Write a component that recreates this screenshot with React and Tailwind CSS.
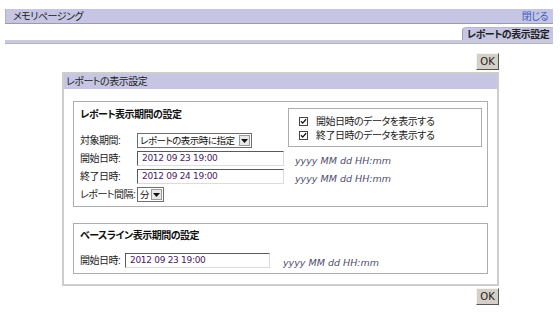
import React from 'react'

const jp = "font-['Liberation_Sans','Noto_Sans_CJK_JP',sans-serif] [font-feature-settings:'palt'] tracking-[-0.5px]"

function OkButton() {
  return (
    <div className="flex justify-end">
      <button className="h-[17px] w-[23px] bg-[#d4d0c8] border border-t-[#f4f4f4] border-l-[#f4f4f4] border-b-[#555] border-r-[#555] text-[10px] leading-[14px] tracking-normal text-[#222] font-['DejaVu_Sans',sans-serif]">
        OK
      </button>
    </div>
  )
}

function Arrow() {
  return (
    <span className="ml-auto mr-[1px] flex h-[11px] w-[11px] shrink-0 items-center justify-center border border-[#9a9a9a] bg-[#e8e8e8]">
      <svg width="7" height="4" viewBox="0 0 7 4">
        <path d="M0 0h7L3.5 4z" fill="#111" />
      </svg>
    </span>
  )
}

function Select({ width, children }) {
  return (
    <div className={`flex h-[15px] shrink-0 items-center border border-[#6e6e6e] bg-white pl-[2px] text-[10px] text-[#111] ${width}`}>
      <span className="mr-[2px] whitespace-nowrap text-[9.5px] leading-[13px]">{children}</span>
      <Arrow />
    </div>
  )
}

function DateInput({ value, width }) {
  return (
    <div className={`flex h-[15px] shrink-0 items-center border border-t-[#5a5a5a] border-l-[#5a5a5a] border-b-[#dcdcdc] border-r-[#dcdcdc] bg-white pl-[4px] ${width}`}>
      <span className="font-['DejaVu_Sans',sans-serif] text-[9px] tracking-[-0.3px] text-[#4a2160]">{value}</span>
    </div>
  )
}

function Hint() {
  return (
    <span className="whitespace-nowrap font-['DejaVu_Sans',sans-serif] text-[9.5px] italic tracking-normal text-[#4b4b6b]">yyyy MM dd HH:mm</span>
  )
}

function Check({ children }) {
  return (
    <div className="flex h-[14px] items-center">
      <svg width="9" height="9" viewBox="0 0 9 9" className="ml-[10px]">
        <rect x="0.5" y="0.5" width="8" height="8" fill="#fff" stroke="#444" />
        <path d="M2 4.2l1.7 1.9 3.4-3.8" fill="none" stroke="#111" strokeWidth="1.3" />
      </svg>
      <span className="ml-[8px] whitespace-nowrap text-[10px] leading-[13px] text-[#222]">{children}</span>
    </div>
  )
}

function Row({ label, labelWidth, children }) {
  return (
    <div className="flex h-[15px] items-center">
      <span className={`shrink-0 whitespace-nowrap text-[10px] leading-[13px] text-[#222] ${labelWidth}`}>{label}</span>
      {children}
    </div>
  )
}

export default function App() {
  return (
    <div className={`h-[320px] w-[560px] bg-white ${jp}`}>
      <div className="pl-[5px] pr-[7px] pt-[9px]">
        <div className="flex h-[15px] items-center justify-between border-b border-l border-b-[#9a9ab0] border-l-[#b0b0c8] bg-[#c6c6e4] pl-[7px] pr-[5px]">
          <span className="text-[10px] leading-[13px] text-[#222]">メモリページング</span>
          <span className="text-[10px] leading-[13px] text-[#3a5cc0]">閉じる</span>
        </div>
        <div className="mt-[3px] flex justify-end">
          <div className="flex h-[13px] w-[91px] items-center justify-center rounded-tl-[4px] border-l border-t border-l-[#a0a0b8] border-t-[#b8b8cc] bg-[#c6c6e4]">
            <span className="whitespace-nowrap text-[10px] font-bold leading-[13px] text-[#222]">レポートの表示設定</span>
          </div>
        </div>
        <div className="h-[4px] border-b border-b-[#b4b4c0] bg-[#cacade]" />
      </div>

      <div className="ml-[62px] mt-[9px] w-[437px]">
        <OkButton />
        <div className="mt-[2px] border-2 border-[#cdcdcd]">
          <div className="flex h-[15px] items-center bg-[#c6c6e4] pl-[2px]">
            <span className="text-[10px] leading-[13px] text-[#222]">レポートの表示設定</span>
          </div>
          <div className="px-[9px] pb-[10px] pt-[12px]">
            <div className="border border-[#adadad] pb-[4px] pl-[6px] pr-[5px] pt-[6px]">
              <div className="flex items-start justify-between">
                <div>
                  <div className="text-[10px] font-bold leading-[13px] text-[#111]">レポート表示期間の設定</div>
                  <div className="mt-[12px]">
                    <Row label="対象期間:" labelWidth="w-[57px]">
                      <Select width="w-[115px]">レポートの表示時に指定</Select>
                    </Row>
                  </div>
                </div>
                <div className="w-[194px] border border-[#adadad] pb-[4px] pt-[5px]">
                  <Check>開始日時のデータを表示する</Check>
                  <Check>終了日時のデータを表示する</Check>
                </div>
              </div>
              <div className="mt-[3px] flex flex-col gap-[3px]">
                <Row label="開始日時:" labelWidth="w-[57px]">
                  <DateInput value="2012 09 23 19:00" width="w-[147px]" />
                  <span className="ml-[11px]"><Hint /></span>
                </Row>
                <Row label="終了日時:" labelWidth="w-[57px]">
                  <DateInput value="2012 09 24 19:00" width="w-[147px]" />
                  <span className="ml-[11px]"><Hint /></span>
                </Row>
                <Row label="レポート間隔:" labelWidth="w-[57px]">
                  <Select width="w-[27px]">分</Select>
                </Row>
              </div>
            </div>

            <div className="mt-[16px] border border-[#adadad] pb-[5px] pl-[6px] pt-[5px]">
              <div className="text-[10px] font-bold leading-[13px] text-[#111]">ベースライン表示期間の設定</div>
              <div className="mt-[11px]">
                <Row label="開始日時:" labelWidth="w-[45px]">
                  <DateInput value="2012 09 23 19:00" width="w-[145px]" />
                  <span className="ml-[13px]"><Hint /></span>
                </Row>
              </div>
            </div>
          </div>
        </div>
        <div className="mt-[2px]">
          <OkButton />
        </div>
      </div>
    </div>
  )
}
